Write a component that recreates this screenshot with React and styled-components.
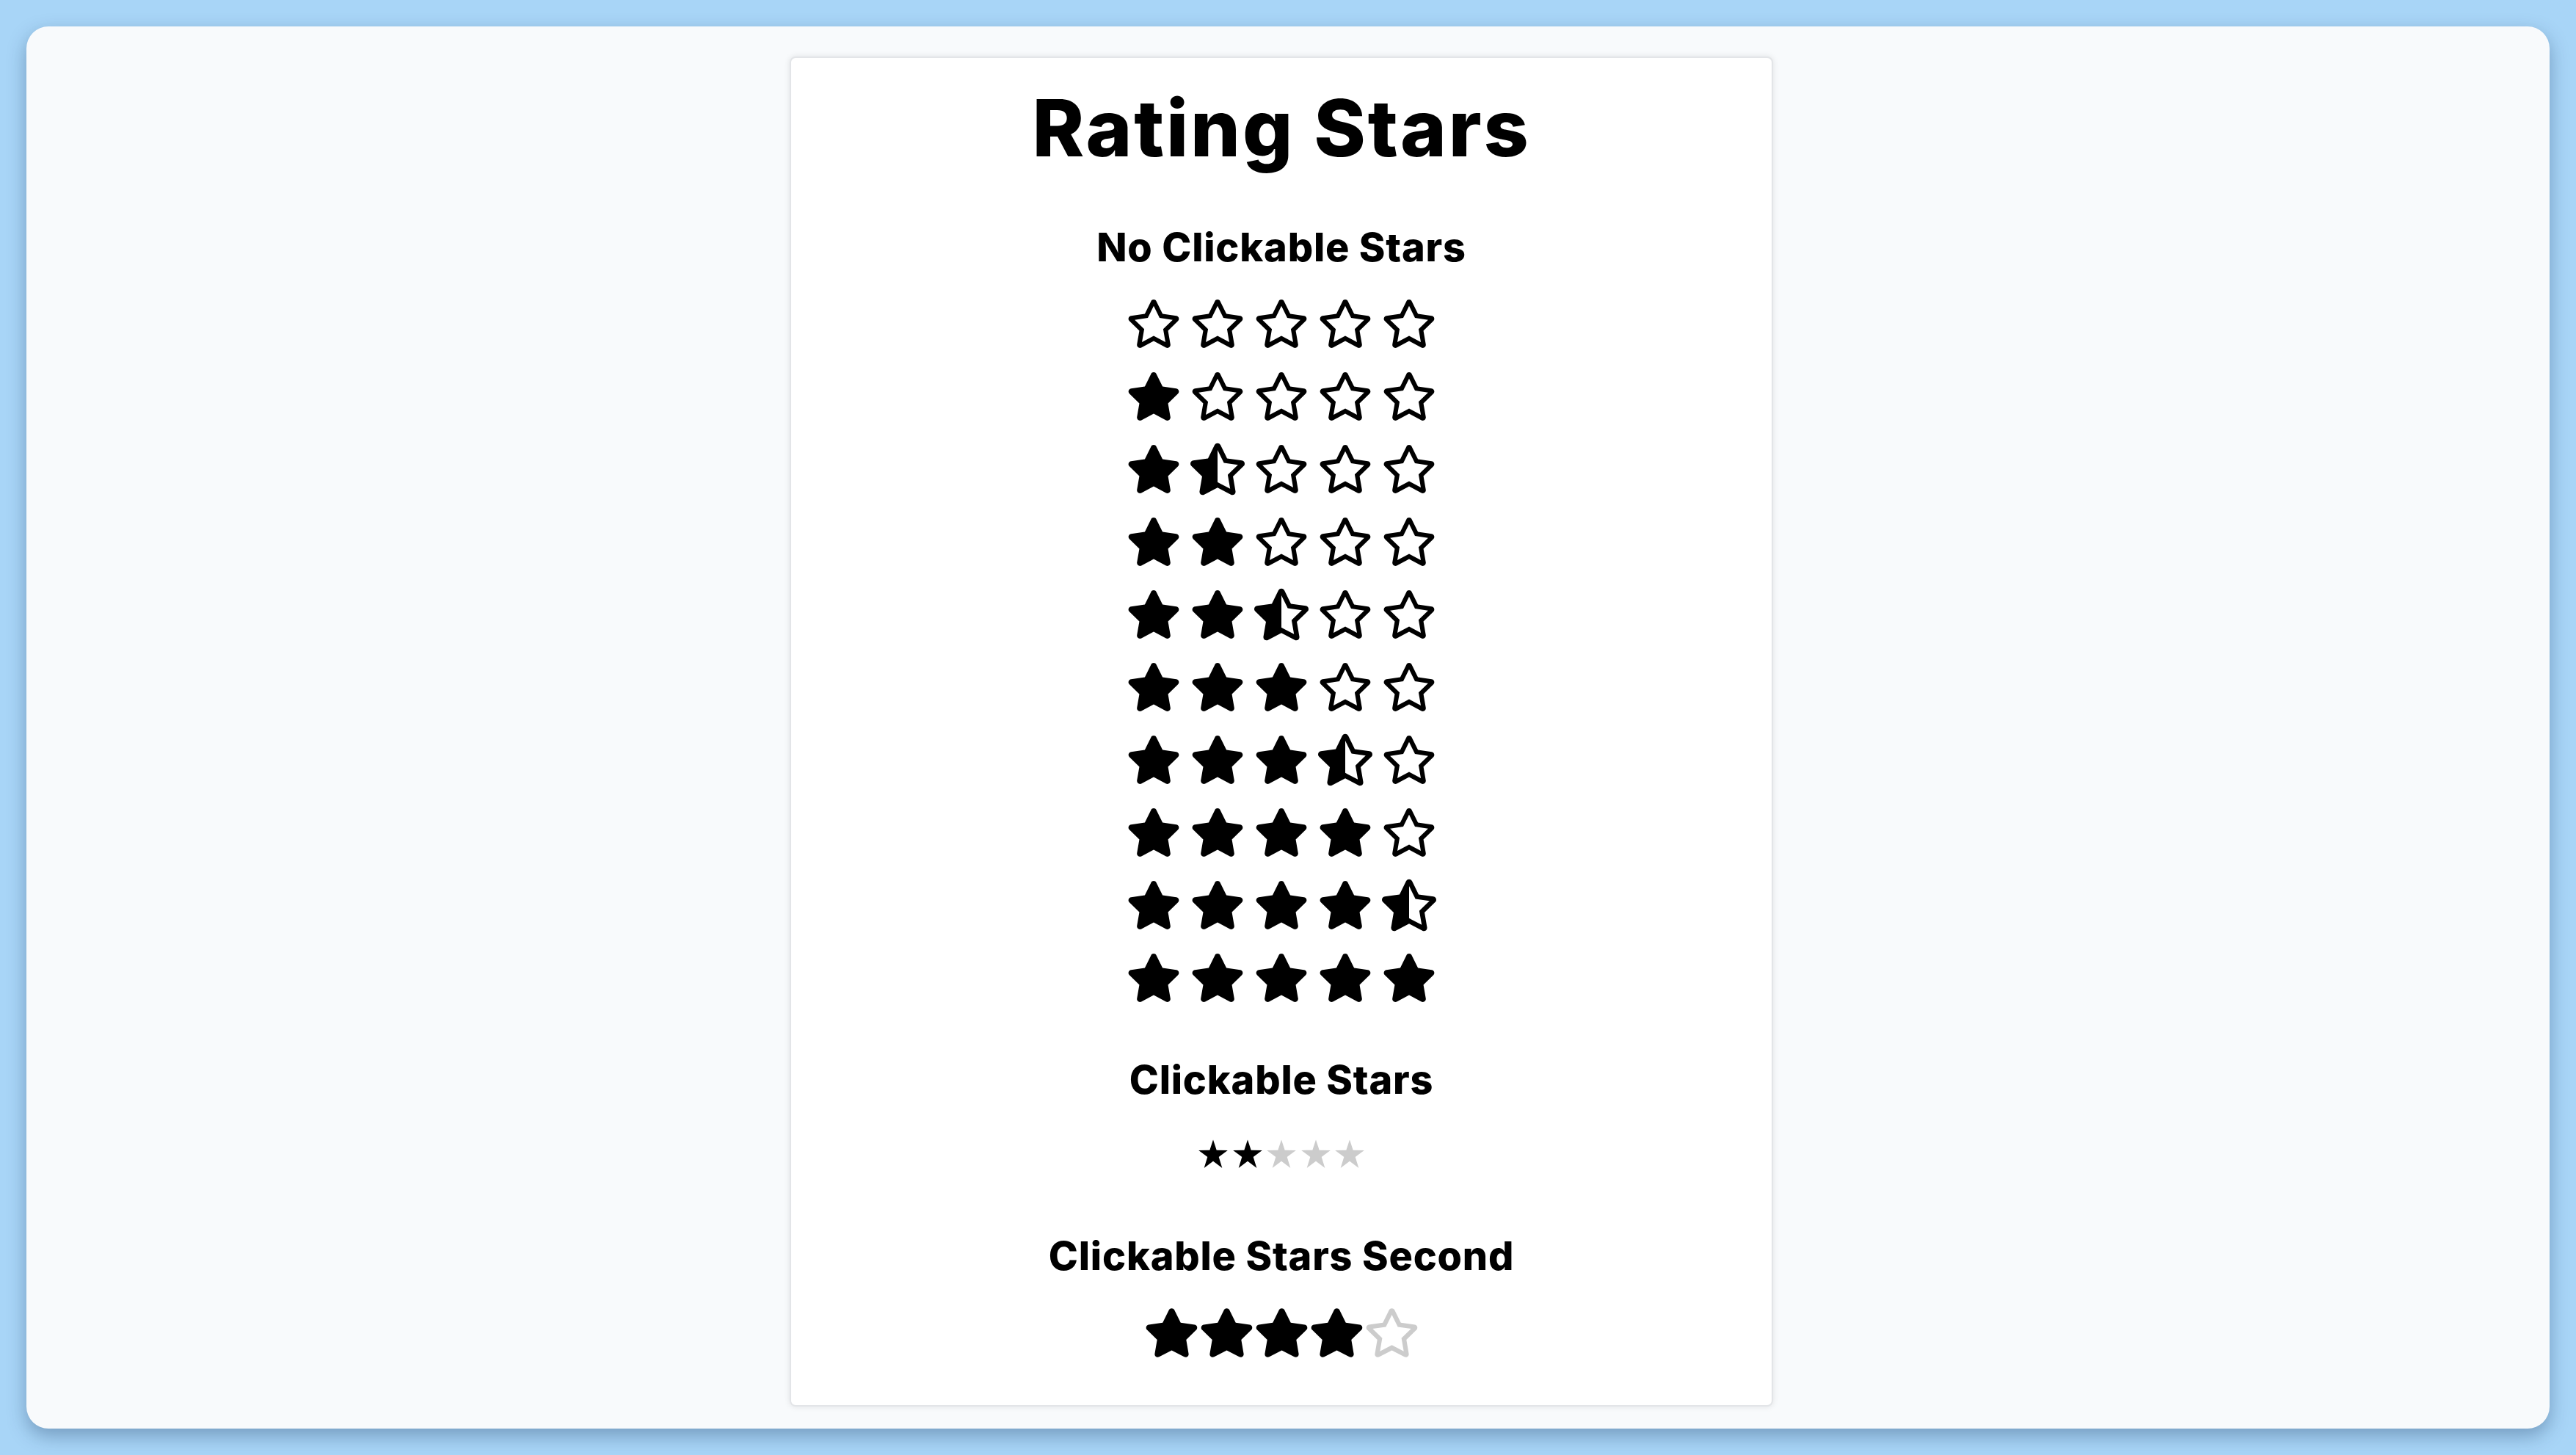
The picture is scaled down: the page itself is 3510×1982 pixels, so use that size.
import React, { useState } from "react";
import styled, { createGlobalStyle } from "styled-components";
import { FaStar, FaRegStar, FaStarHalfAlt } from "react-icons/fa";

const GlobalStyle = createGlobalStyle`
  html, body {
    margin: 0;
    padding: 0;
    height: 100%;
  }
  body {
    background: #a8d5f7;
    font-family: "Inter", "Noto Sans", sans-serif;
    color: #000;
  }
`;

const Frame = styled.div`
  margin: 36px;
  padding-right: 18px;
  height: calc(100vh - 72px);
  background: #f8fafc;
  border-radius: 30px;
  box-shadow: 0 10px 26px rgba(20, 50, 90, 0.35);
  overflow: hidden;
  display: flex;
  justify-content: center;
  align-items: flex-start;
`;

const Card = styled.div`
  margin-top: 41px;
  width: 1340px;
  box-sizing: border-box;
  padding: 42px 0 61px;
  background: #fff;
  border: 2px solid #e3e5e8;
  border-radius: 8px;
  box-shadow: 0 0 8px rgba(0, 0, 0, 0.1);
  display: flex;
  flex-direction: column;
  align-items: center;
`;

const Title = styled.h1`
  margin: 0;
  font-size: 107px;
  line-height: 106px;
  font-weight: 800;
  letter-spacing: 2.8px;
`;

const SectionTitle = styled.h2`
  margin: ${(p) => p.$top}px 0 0;
  font-size: 54px;
  line-height: 54px;
  font-weight: 800;
  letter-spacing: 0.8px;
`;

const StarGrid = styled.div`
  margin-top: 40px;
  display: flex;
  flex-direction: column;
  gap: 25px;
`;

const StarRow = styled.div`
  display: flex;
  justify-content: center;
  align-items: center;
  gap: ${(p) => p.$gap}px;
  margin-top: ${(p) => p.$top || 0}px;

  svg {
    display: block;
    width: ${(p) => p.$size}px;
    height: ${(p) => p.$size}px;
    flex: none;
  }
`;

const SmallStar = styled.button`
  border: 0;
  padding: 0;
  background: none;
  cursor: pointer;
  color: ${(p) => (p.$on ? "#000" : "#cccccc")};
  display: block;
`;

const BigStar = styled.button`
  border: 0;
  padding: 0;
  background: none;
  cursor: pointer;
  display: block;
  color: ${(p) => (p.$on ? "#000" : "#cccccc")};
`;

const ratings = [0, 1, 1.5, 2, 2.5, 3, 3.5, 4, 4.5, 5];

function StaticStars({ value }) {
  return (
    <StarRow $gap={13} $size={74}>
      {[1, 2, 3, 4, 5].map((i) => {
        if (value >= i) return <FaStar key={i} />;
        if (value >= i - 0.5) return <FaStarHalfAlt key={i} />;
        return <FaRegStar key={i} />;
      })}
    </StarRow>
  );
}

function PlainStar() {
  return (
    <svg viewBox="0 0 41 40" width="41" height="40">
      <polygon
        fill="currentColor"
        points="20.5,0 25.3,14.6 40.8,14.8 28.4,24 33.1,39.6 20.5,30.1 7.9,39.6 12.6,24 0.2,14.8 15.7,14.6"
      />
    </svg>
  );
}

export default function App() {
  const [first, setFirst] = useState(2);
  const [second, setSecond] = useState(4);

  return (
    <>
      <GlobalStyle />
      <Frame>
        <Card>
          <Title>Rating Stars</Title>

          <SectionTitle $top={83}>No Clickable Stars</SectionTitle>
          <StarGrid>
            {ratings.map((r) => (
              <StaticStars key={r} value={r} />
            ))}
          </StarGrid>

          <SectionTitle $top={75}>Clickable Stars</SectionTitle>
          <StarRow $gap={6.5} $size={40} $top={54}>
            {[1, 2, 3, 4, 5].map((i) => (
              <SmallStar key={i} $on={i <= first} onClick={() => setFirst(i)}>
                <PlainStar />
              </SmallStar>
            ))}
          </StarRow>

          <SectionTitle $top={92}>Clickable Stars Second</SectionTitle>
          <StarRow $gap={0} $size={75} $top={40}>
            {[1, 2, 3, 4, 5].map((i) => (
              <BigStar key={i} $on={i <= second} onClick={() => setSecond(i)}>
                {i <= second ? <FaStar /> : <FaRegStar />}
              </BigStar>
            ))}
          </StarRow>
        </Card>
      </Frame>
    </>
  );
}
